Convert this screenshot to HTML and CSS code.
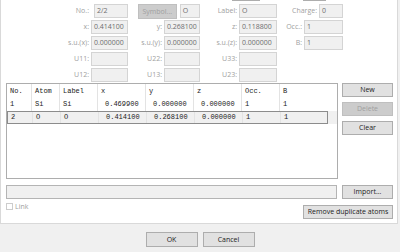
FILE: index.html
```html
<!DOCTYPE html>
<html lang="en">
<head>
    <meta charset="UTF-8">
    <title>Atoms</title>
    <link rel="stylesheet" href="styles.css">
</head>
<body>

<div class="panel">
    <div class="clip">
        <span class="clip-a"></span>
        <span class="clip-b"></span>
    </div>

    <div class="fields">
        <label class="lbl">No.:</label>
        <div class="box box-no">2/2</div>
        <div class="span2">
            <div class="btn-symbol">Symbol...</div>
            <div class="box box-sym">O</div>
        </div>
        <label class="lbl">Label:</label>
        <div class="box">O</div>
        <div class="span2 end">
            <label class="lbl">Charge:</label>
            <div class="box box-charge">0</div>
        </div>

        <label class="lbl">x:</label>
        <div class="box">0.414100</div>
        <label class="lbl">y:</label>
        <div class="box">0.268100</div>
        <label class="lbl">z:</label>
        <div class="box">0.118800</div>
        <label class="lbl">Occ.:</label>
        <div class="box">1</div>

        <label class="lbl">s.u.(x):</label>
        <div class="box">0.000000</div>
        <label class="lbl">s.u.(y):</label>
        <div class="box">0.000000</div>
        <label class="lbl">s.u.(z):</label>
        <div class="box">0.000000</div>
        <label class="lbl">B:</label>
        <div class="box">1</div>

        <label class="lbl">U11:</label>
        <div class="box"></div>
        <label class="lbl">U22:</label>
        <div class="box"></div>
        <label class="lbl">U33:</label>
        <div class="box"></div>
        <div></div>
        <div></div>

        <label class="lbl">U12:</label>
        <div class="box"></div>
        <label class="lbl">U13:</label>
        <div class="box"></div>
        <label class="lbl">U23:</label>
        <div class="box"></div>
    </div>

    <div class="main">
        <div class="list">
            <div class="cells head">
                <span>No.</span><span>Atom</span><span>Label</span><span>x</span><span>y</span><span>z</span><span>Occ.</span><span>B</span>
            </div>
            <div class="row">
                <div class="cells">
                    <span>1</span><span>Si</span><span>Si</span><span class="num">0.469900</span><span class="num">0.000000</span><span class="num">0.000000</span><span>1</span><span>1</span>
                </div>
            </div>
            <div class="row sel">
                <div class="cells">
                    <span>2</span><span>O</span><span>O</span><span class="num">0.414100</span><span class="num">0.268100</span><span class="num">0.000000</span><span>1</span><span>1</span>
                </div>
            </div>
        </div>
        <div class="side">
            <button class="btn">New</button>
            <button class="btn" disabled>Delete</button>
            <button class="btn">Clear</button>
        </div>
    </div>

    <div class="import-row">
        <div class="path"></div>
        <button class="btn btn-side">Import...</button>
    </div>

    <div class="link-row">
        <label class="check"><span class="check-box"></span>Link</label>
        <button class="btn btn-remove">Remove duplicate atoms</button>
    </div>
</div>

<div class="footer">
    <button class="btn btn-foot">OK</button>
    <button class="btn btn-foot">Cancel</button>
</div>

</body>
</html>
```

FILE: styles.css
```css
body {
    margin: 0;
    background-color: #f0f0f0;
    font-family: "Open Sans", "Noto Sans", sans-serif;
    font-size: 7px;
    color: #000;
}
.panel {
    width: 398px;
    height: 224px;
    box-sizing: border-box;
    background-color: white;
    border-left: 1px solid #d9d9d9;
    border-right: 1px solid #d9d9d9;
    border-bottom: 1px solid #d9d9d9;
}
.clip {
    height: 1px;
    position: relative;
}
.clip span {
    position: absolute;
    top: 0;
    height: 1px;
    background-color: #adadad;
}
.clip-a { left: 231px; width: 28px; }
.clip-b { left: 302px; width: 23px; }

.fields {
    display: grid;
    grid-template-columns: 88px 37px 32px 36px 35px 38px 23px 39px;
    grid-auto-rows: 14px;
    column-gap: 2px;
    row-gap: 2px;
    padding-top: 3px;
}
.lbl {
    text-align: right;
    line-height: 14px;
    color: #a0a0a0;
    white-space: nowrap;
}
.box {
    background-color: #f0f0f0;
    border: 1px solid #d4d4d4;
    color: #6d6d6d;
    padding-left: 2px;
    line-height: 12px;
    white-space: nowrap;
    overflow: hidden;
}
.box-no { margin-left: 3px; }
.span2 {
    grid-column: span 2;
    display: flex;
}
.span2.end { justify-content: flex-end; gap: 2px; }
.btn-symbol {
    margin-left: 8px;
    width: 40px;
    height: 15px;
    box-sizing: border-box;
    margin-top: 0;
    background-color: #cccccc;
    border: 1px solid #bfbfbf;
    color: #a0a0a0;
    text-align: center;
    line-height: 13px;
}
.box-sym { margin-left: 3px; width: 17px; }
.box-charge { width: 20px; }

.main {
    display: flex;
    margin-top: 1px;
    margin-left: 5px;
}
.list {
    width: 332px;
    height: 96px;
    box-sizing: border-box;
    border: 1px solid #adadad;
    font-family: "Liberation Mono", monospace;
    font-size: 7px;
    color: #222;
}
.cells {
    display: grid;
    grid-template-columns: 24px 28px 38px 48px 48px 48px 38px 49px;
    width: 321px;
    height: 13px;
    box-sizing: border-box;
    line-height: 13px;
}
.cells span {
    padding-left: 3px;
    border-left: 1px solid #e3e3e3;
    white-space: nowrap;
}
.cells span:first-child { border-left: none; }
.cells .num { padding-left: 7px; }
.head { height: 14px; line-height: 14px; }
.row.sel { background-color: #f0f0f0; }
.row.sel .cells {
    border: 1px solid #8c8c8c;
    line-height: 11px;
}
.side {
    display: flex;
    flex-direction: column;
    gap: 5px;
    margin-left: 4px;
}
.btn {
    width: 51px;
    height: 14px;
    box-sizing: border-box;
    padding: 0;
    background-color: #e1e1e1;
    border: 1px solid #adadad;
    font-family: "Open Sans", "Noto Sans", sans-serif;
    font-size: 7px;
    color: #222;
    line-height: 12px;
}
.btn:disabled {
    background-color: #cccccc;
    border-color: #bfbfbf;
    color: #a0a0a0;
}
.import-row {
    display: flex;
    margin-top: 6px;
    margin-left: 5px;
}
.path {
    width: 331px;
    height: 14px;
    box-sizing: border-box;
    background-color: #f0f0f0;
    border: 1px solid #b4b4b4;
}
.btn-side { margin-left: 5px; }
.link-row {
    display: flex;
    justify-content: space-between;
    align-items: flex-start;
    margin-left: 5px;
    margin-right: 4px;
}
.check {
    display: flex;
    align-items: center;
    gap: 2px;
    margin-top: 3px;
    color: #a0a0a0;
}
.check-box {
    width: 7px;
    height: 7px;
    box-sizing: border-box;
    border: 1px solid #cccccc;
}
.btn-remove {
    width: 90px;
    height: 14px;
    margin-top: 6px;
}
.footer {
    display: flex;
    justify-content: center;
    gap: 5px;
    padding-top: 8px;
}
.btn-foot {
    width: 52px;
    height: 15px;
}
```
